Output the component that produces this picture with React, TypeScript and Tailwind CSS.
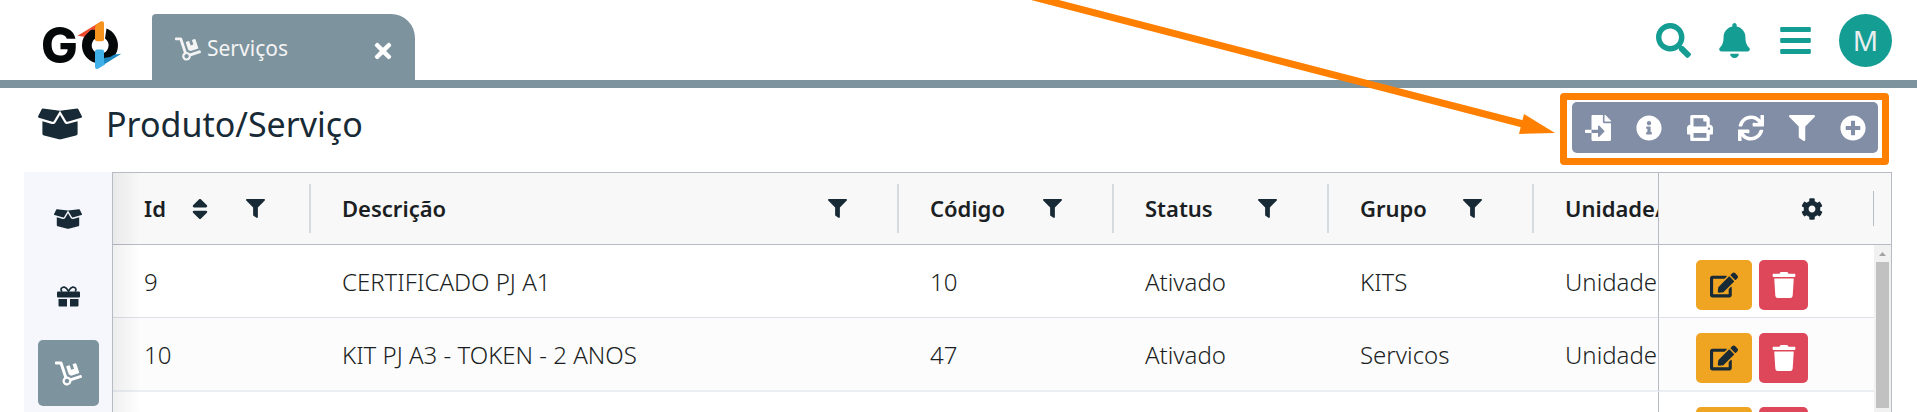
import type { ReactNode } from "react";
import type { IconType } from "react-icons";
import {
  FaBars,
  FaBell,
  FaBoxOpen,
  FaCog,
  FaDolly,
  FaEdit,
  FaFileImport,
  FaFilter,
  FaInfoCircle,
  FaPlusCircle,
  FaPrint,
  FaSearch,
  FaSort,
  FaSync,
  FaTimes,
  FaTrash,
} from "react-icons/fa";

type Row = {
  id: string;
  descricao: string;
  codigo: string;
  status: string;
  grupo: string;
  unidade: string;
};

const rows: Row[] = [
  { id: "9", descricao: "CERTIFICADO PJ A1", codigo: "10", status: "Ativado", grupo: "KITS", unidade: "Unidade" },
  { id: "10", descricao: "KIT PJ A3 - TOKEN - 2 ANOS", codigo: "47", status: "Ativado", grupo: "Servicos", unidade: "Unidade" },
  { id: "", descricao: "", codigo: "", status: "", grupo: "", unidade: "" },
];

const toolbar: { label: string; Icon: IconType }[] = [
  { label: "Importar", Icon: FaFileImport },
  { label: "Informações", Icon: FaInfoCircle },
  { label: "Imprimir", Icon: FaPrint },
  { label: "Atualizar", Icon: FaSync },
  { label: "Filtrar", Icon: FaFilter },
  { label: "Adicionar", Icon: FaPlusCircle },
];

function Logo() {
  return (
    <svg viewBox="40 18 84 54" className="h-[54px] w-[84px] shrink-0 overflow-visible" role="img" aria-label="GO">
      <text x="41" y="63" fontFamily="Inter, sans-serif" fontWeight="800" fontSize="49" fill="#050808">
        G
      </text>
      <path d="M95 28.1 A18 18 0 0 0 95 62.7 L95 52 A8.3 8.3 0 0 1 95 38.8 Z" fill="#050808" />
      <path d="M106.5 28.6 A18 18 0 0 1 104 62.9 L104 52.7 A8.3 8.3 0 0 0 105 38.4 Z" fill="#050808" />
      <path d="M77.5 35.8 L101 21.6 L103 23 L95 30 L91 29.5 L84 36.8 Z" fill="#ee4a2b" />
      <path d="M95 28.5 V39.5 Q95 41.3 97 41.3 H102 Q104 41.3 104 39.3 V23.5 Q104 20.6 101.2 21.6 L95.5 25 Z" fill="#f6921e" />
      <path d="M121.3 53.8 L100 67 L104 58 L110 57 L114.5 54.6 Z" fill="#1c87c0" />
      <path d="M95 51.5 Q95 49.5 97 49.5 H102 Q104 49.5 104 51.5 V62 L105 64.6 L98 68.8 Q95 69.8 95 66.8 Z" fill="#3fb0e8" />
    </svg>
  );
}

function GiftIcon() {
  return (
    <svg viewBox="0 0 23 21" className="h-[21px] w-[23px]" fill="currentColor" aria-hidden="true">
      <path
        d="M5 5.5 C2.6 3 5 .9 7.4 1.1 C9.6 1.4 10.6 3.6 11.5 5.2 C12.4 3.6 13.4 1.4 15.6 1.1 C18 .9 20.4 3 18 5.5"
        fill="none"
        stroke="currentColor"
        strokeWidth="1.6"
      />
      <rect x="0" y="5.5" width="23" height="6" rx="1" />
      <path d="M1.5 13 H10 V20.5 H2.5 Q1.5 20.5 1.5 19.5 Z M13 13 H21.5 V19.5 Q21.5 20.5 20.5 20.5 H13 Z" />
    </svg>
  );
}

function SideButton({ label, active, children }: { label: string; active?: boolean; children: ReactNode }) {
  return (
    <button
      aria-label={label}
      className={`flex h-[66px] w-[61px] shrink-0 items-center justify-center rounded-[5px] ${
        active ? "bg-[#7d939e] text-white" : "text-[#172a35]"
      }`}
    >
      {children}
    </button>
  );
}

function HeadCell({ title, sortable, filter = true }: { title: string; sortable?: boolean; filter?: boolean }) {
  return (
    <th scope="col" className="border-b border-[#b7bbc6] p-0 text-left font-semibold">
      <div className="flex h-[71px] items-center overflow-hidden pl-[31px] text-[22px]">
        <span>{title}</span>
        {sortable && (
          <button aria-label={`Ordenar ${title}`} className="ml-[21px]">
            <FaSort className="size-[26px] text-[#172a35]" />
          </button>
        )}
        {filter && (
          <>
            <button aria-label={`Filtrar ${title}`} className={`ml-auto ${sortable ? "mr-11" : "mr-[50px]"}`}>
              <FaFilter className="size-[19px] text-[#172a35]" />
            </button>
            <span className="h-[49px] w-[2px] bg-[#d6dbe0]" />
          </>
        )}
      </div>
    </th>
  );
}

function Cell({ children }: { children: ReactNode }) {
  return <td className="overflow-hidden p-0 pt-0.5 pl-[31px] whitespace-nowrap">{children}</td>;
}

export default function App() {
  return (
    <div className="relative flex h-screen flex-col overflow-hidden bg-white font-['Noto_Sans',sans-serif] text-[#172a35]">
      <header className="flex h-[88px] shrink-0 border-b-8 border-[#7d939e] pr-[25px] pl-10">
        <div className="flex items-center pt-[10px]">
          <Logo />
        </div>
        <div className="mt-[14px] ml-7 flex w-[263px] items-center rounded-tl-[4px] rounded-tr-[24px] bg-[#7d939e] pt-1 pr-5 pl-[23px] text-[#f4f4f4]">
          <FaDolly className="size-[26px]" />
          <a href="#servicos" className="ml-[6px] text-[21px]">
            Serviços
          </a>
          <button aria-label="Fechar aba" className="mt-1 ml-auto text-white">
            <FaTimes className="size-6" />
          </button>
        </div>
        <nav aria-label="Atalhos" className="ml-auto flex items-center gap-[26px] text-[#149d93]">
          <button aria-label="Pesquisar">
            <FaSearch className="size-[35px]" />
          </button>
          <button aria-label="Notificações">
            <FaBell className="size-[35px]" />
          </button>
          <button aria-label="Menu">
            <FaBars className="size-[35px]" />
          </button>
          <button aria-label="Perfil" className="flex size-[53px] items-center justify-center rounded-full bg-[#149d93] text-[28px] text-[#e9eeee]">
            M
          </button>
        </nav>
      </header>

      <div className="flex h-[84px] shrink-0 items-center pr-[39px] pl-[38px]">
        <FaBoxOpen className="mb-3 size-11" />
        <h1 className="mb-3 ml-6 text-[34px]">Produto/Serviço</h1>
        <div className="relative mb-[5px] ml-auto flex rounded-[5px] bg-[#828ea6] text-white">
          {toolbar.map(({ label, Icon }) => (
            <button key={label} aria-label={label} className="flex size-[51px] items-center justify-center">
              <Icon className="size-[26px]" />
            </button>
          ))}
          <div className="pointer-events-none absolute -top-[9px] -right-[11px] -bottom-3 -left-3 rounded-[4px] border-[7px] border-[#ff8000]" />
        </div>
      </div>

      <main className="flex min-h-0 flex-1 pr-[25px] pl-6">
        <nav aria-label="Seções" className="flex w-[88px] shrink-0 flex-col items-center gap-[11px] bg-[#f6f7fc] pt-[14px]">
          <SideButton label="Produtos">
            <FaBoxOpen className="size-7" />
          </SideButton>
          <SideButton label="Kits">
            <GiftIcon />
          </SideButton>
          <SideButton label="Serviços" active>
            <FaDolly className="size-[27px]" />
          </SideButton>
        </nav>

        <div className="relative min-w-0 flex-1 overflow-hidden border border-b-0 border-[#b7bbc6]">
          <table className="w-full table-fixed border-separate border-spacing-0">
            <colgroup>
              <col className="w-[198px]" />
              <col />
              <col className="w-[215px]" />
              <col className="w-[215px]" />
              <col className="w-[205px]" />
              <col className="w-[124px]" />
              <col className="w-[233px]" />
            </colgroup>
            <thead className="bg-[#f8f8f8] text-[#1b1f23]">
              <tr>
                <HeadCell title="Id" sortable />
                <HeadCell title="Descrição" />
                <HeadCell title="Código" />
                <HeadCell title="Status" />
                <HeadCell title="Grupo" />
                <HeadCell title="Unidade/" filter={false} />
                <th scope="col" className="border-b border-l border-[#b7bbc6] p-0">
                  <div className="flex items-center justify-end pr-[17px]">
                    <button aria-label="Configurar colunas">
                      <FaCog className="size-[22px] text-[#172a35]" />
                    </button>
                    <span className="ml-[50px] h-[35px] w-px bg-[#b7bbc6]" />
                  </div>
                </th>
              </tr>
            </thead>
            <tbody className="text-2xl font-light text-[#1b1f23]">
              {rows.map((row, i) => (
                <tr
                  key={i}
                  className="h-[73px] even:h-[74px] even:bg-[#fcfcfc] [&>td]:border-b [&>td]:border-b-[#dde0e8] even:[&>td]:border-b-2 even:[&>td]:border-b-[#ebeff3]"
                >
                  <Cell>{row.id}</Cell>
                  <Cell>{row.descricao}</Cell>
                  <Cell>{row.codigo}</Cell>
                  <Cell>{row.status}</Cell>
                  <Cell>{row.grupo}</Cell>
                  <Cell>{row.unidade}</Cell>
                  <td className="border-l border-l-[#b7bbc6] p-0 pl-[37px]">
                    <div className="flex gap-[7px] pt-2">
                      <button aria-label="Editar" className="flex h-[50px] w-14 items-center justify-center rounded-[5px] bg-[#efa422] text-[#172a35]">
                        <FaEdit className="size-7" />
                      </button>
                      <button aria-label="Excluir" className="flex h-[50px] w-[49px] items-center justify-center rounded-[5px] bg-[#de4659] text-white">
                        <FaTrash className="size-[26px]" />
                      </button>
                    </div>
                  </td>
                </tr>
              ))}
            </tbody>
          </table>
          <div className="pointer-events-none absolute inset-y-0 left-0 w-7 bg-linear-to-r from-black/6 to-transparent" />
          <div className="absolute top-[72px] right-0 bottom-0 flex w-[17px] flex-col items-center bg-[#f1f1f1]" aria-hidden="true">
            <svg viewBox="0 0 17 17" className="size-[17px] shrink-0" fill="#a3a3a3">
              <path d="M5 11 L8.5 7 L12 11 Z" />
            </svg>
            <div className="h-[146px] w-[13px] shrink-0 bg-[#c1c1c1]" />
          </div>
        </div>
      </main>

      <svg viewBox="0 0 530 160" className="pointer-events-none absolute top-0 right-[355px] h-[160px] w-[530px]" aria-hidden="true">
        <path d="M-14 -7 L491 124" stroke="#ff8000" strokeWidth="7" fill="none" />
        <path d="M492 114 L523 133 L487 134 Z" fill="#ff8000" />
      </svg>
    </div>
  );
}
